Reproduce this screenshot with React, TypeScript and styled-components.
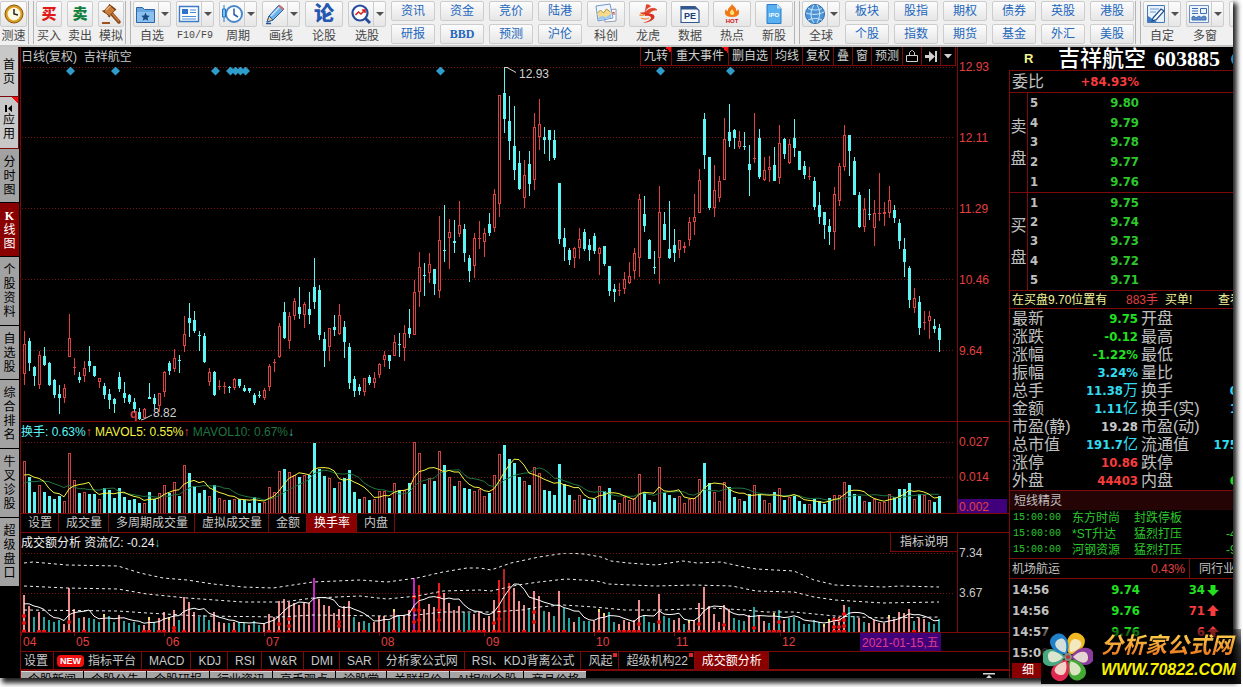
import React from "react";
import styled, { createGlobalStyle, css } from "styled-components";

const UI = `"Liberation Sans", "Noto Sans CJK SC", sans-serif`;
const NUM = `"DejaVu Sans Condensed", "DejaVu Sans", "Noto Sans CJK SC", sans-serif`;
const LINE = "#7c0a0a";
const RED = "#e04040";
const CYAN = "#5cf6f6";

const Global = createGlobalStyle`
  * { box-sizing: border-box; }
  body { margin: 0; background: #fff; font: 12px/14px ${UI}; }
  button { font: inherit; color: inherit; background: none; border: 0; padding: 0; margin: 0; white-space: nowrap; cursor: pointer; }
  svg { display: block; }
`;

/* ---------- data ---------- */

type Candle = [up: 0 | 1, high: number, top: number, bottom: number, low: number];

const candles: Candle[] = [
  [1,331,344,374,385],[0,338,341,363,371],[0,366,367,376,386],[1,351,355,385,389],[0,347,356,365,366],
  [0,362,363,385,386],[0,379,380,395,398],[0,385,394,398,414],[1,384,388,398,403],[1,314,338,357,357],
  [1,358,367,368,375],[0,372,377,380,383],[1,361,368,376,382],[0,346,361,366,372],[0,366,366,376,377],
  [1,378,378,382,388],[0,383,386,395,399],[0,389,394,400,409],[0,398,399,404,413],[0,372,377,389,392],
  [0,382,393,398,403],[0,394,395,402,404],[0,398,402,409,413],[0,408,412,419,420],[1,408,409,418,418],
  [0,383,397,399,399],[0,394,398,404,409],[1,393,393,406,412],[1,371,372,392,397],[0,361,363,371,375],
  [1,349,358,369,372],[0,355,360,361,373],[1,316,334,346,352],[0,303,318,323,337],[0,311,320,331,333],
  [0,331,335,336,351],[0,333,336,362,363],[1,368,372,382,386],[0,371,372,395,396],[1,380,386,387,390],
  [1,382,386,387,394],[0,386,387,388,393],[1,378,379,388,390],[0,379,379,386,388],[0,385,388,391,392],
  [0,388,388,391,393],[0,393,395,403,405],[0,391,395,396,398],[1,388,390,398,400],[1,364,366,387,391],
  [1,359,362,363,372],[1,323,326,357,358],[0,302,312,338,339],[1,312,316,341,349],[1,298,301,316,320],
  [0,287,307,314,319],[1,302,304,315,328],[0,292,309,315,324],[0,258,287,302,309],[0,285,290,335,340],
  [0,332,339,351,367],[1,328,328,347,361],[0,315,327,330,336],[1,304,315,334,335],[0,321,327,342,358],
  [0,343,347,383,389],[0,376,379,391,397],[0,384,387,391,395],[1,378,378,392,396],[0,375,377,383,385],
  [1,372,378,383,388],[1,363,364,375,378],[1,351,355,360,367],[0,355,355,361,369],[1,335,342,356,356],
  [0,333,344,345,357],[1,325,333,348,361],[0,309,328,334,338],[1,280,292,335,335],[1,252,267,292,307],
  [0,263,275,276,296],[1,253,264,273,283],[0,269,269,284,295],[1,216,240,291,298],[0,205,250,251,262],
  [1,219,232,238,269],[0,220,241,243,253],[1,201,225,234,237],[0,224,229,253,262],[0,255,258,271,282],
  [1,233,238,266,278],[1,221,238,239,249],[1,228,233,242,257],[0,213,224,233,236],[1,189,194,228,232],
  [1,95,95,204,217],[0,67,93,119,133],[0,96,121,141,160],[0,106,146,170,180],[0,151,163,189,190],
  [1,160,175,198,208],[0,151,164,184,196],[1,113,127,180,190],[1,99,124,137,150],[0,127,137,140,154],
  [0,130,130,140,161],[0,130,140,158,160],[0,183,183,239,244],[0,228,238,247,261],[0,248,250,260,265],
  [1,247,248,258,268],[1,228,239,248,259],[0,229,232,249,251],[0,239,245,250,261],[0,233,236,251,254],
  [1,247,248,254,275],[0,246,246,264,266],[0,266,266,291,296],[0,284,289,292,302],[1,283,290,291,296],
  [1,272,279,289,294],[1,262,276,283,284],[1,248,253,271,279],[1,194,199,258,277],[0,196,214,226,232],
  [0,239,240,259,259],[0,251,267,268,274],[1,186,212,258,284],[0,212,224,240,240],[0,201,249,258,259],
  [0,229,245,253,262],[1,240,240,250,258],[1,242,246,248,253],[1,217,222,240,246],[1,194,217,222,235],
  [1,169,180,213,213],[0,113,119,155,169],[0,157,157,208,210],[1,165,190,208,217],[1,176,181,198,202],
  [1,118,139,180,180],[0,104,132,141,147],[0,129,130,138,149],[1,131,141,147,149],[0,132,146,147,150],
  [0,145,164,170,196],[1,113,158,159,163],[0,129,138,177,179],[1,157,170,180,181],[1,156,167,170,182],
  [0,147,165,181,181],[1,125,143,178,184],[0,138,139,154,159],[1,139,144,163,164],[0,119,138,148,157],
  [0,151,151,170,170],[0,161,166,175,179],[1,167,176,177,180],[0,177,181,207,210],[0,192,205,217,224],
  [0,212,212,225,239],[0,219,226,232,245],[1,187,194,232,250],[1,163,166,201,206],[1,125,135,167,171],
  [0,135,135,151,176],[0,157,161,195,195],[0,192,195,227,228],[1,198,209,227,232],[0,189,214,215,220],
  [1,200,213,228,246],[1,173,213,214,221],[1,202,212,214,226],[1,186,200,213,218],[0,205,210,218,223],
  [0,219,223,241,249],[0,238,249,262,277],[0,266,268,300,308],[1,288,298,308,313],[0,296,302,328,335],
  [1,311,322,323,330],[1,311,316,321,339],[0,319,326,329,333],[0,324,328,340,352],
];

const volumes = [
  52,36,21,28,21,17,14,17,12,60,33,20,21,19,19,14,25,23,15,25,16,13,14,10,10,21,14,20,28,20,
  31,17,48,40,27,20,23,17,28,15,13,13,14,14,13,10,16,10,11,26,21,42,44,41,38,36,38,38,70,44,
  37,35,25,31,35,43,21,14,16,13,14,22,22,15,30,23,23,30,71,60,29,35,32,62,48,36,27,32,25,24,
  22,24,17,20,38,59,68,54,50,36,32,28,46,40,23,22,18,49,29,18,13,18,14,13,14,27,22,25,13,10,
  16,13,15,39,21,13,11,46,20,18,15,17,10,14,15,34,50,30,21,12,31,26,16,14,12,19,28,19,13,10,
  21,25,13,16,17,12,9,9,14,12,9,15,18,18,31,28,19,17,12,11,14,11,11,19,16,24,24,30,14,19,
  18,13,11,17,
];

// S: strong inflow, T: outflow, Y: turning point, M: extreme volume, R / D: surge days
const flow =
  "SSTSTTTTSSSTSTTTYTTSTTTTSYTSSYSTSSSTTTSSSTSTTSTTSSSSSSSSSSMSSSSSSSTSTTSSSTYTSSMRSSSRSSSSTTSSSSSRDRSSSTSSTSTSTTSTTTSYYTTSSSSSTTTSTTSSTYSSSSSSSSTTTSTSSTYTSTTTTTTTYYSSSTTSTSSSSYSSSSTSSTT";

const flowColor: Record<string, string> = {
  S: "#f08c8c", T: "#22a8a4", Y: "#f08c8c", M: "#c424c4", R: "#f01818", D: "#b82424",
};

const signals: Record<number, number[]> = {
  0: [16, 9], 9: [10], 30: [4], 51: [8], 53: [13, 6], 63: [10, 6], 78: [35, 22, 10], 79: [22, 12],
  83: [35, 22, 12], 94: [9], 95: [20, 13], 102: [20, 10], 123: [8], 127: [10], 135: [8], 140: [7],
  146: [4], 151: [10], 162: [12, 5], 163: [12, 5], 164: [18, 12, 6],
};
const baseMarks = [0,3,4,9,12,24,25,27,28,30,32,37,42,49,51,53,61,68,74,76,78,79,81,83,87,89,90,91,92,94,95,100,105,108,115,119,120,121,122,123,127,131,133,135,136,138,139,140,141,142,144,149,150,151,162,163,164,178];

const amounts = volumes.map((v, i) => {
  const mid = (candles[i][2] + candles[i][3]) / 2;
  return Math.round(v * (0.71 + (370 - mid) * 0.0008));
});

const average = (values: number[], span: number, lead: number[]) => {
  const all = [...lead, ...values];
  return values.map((_, i) => {
    const end = i + lead.length + 1;
    const part = all.slice(end - span, end);
    return part.reduce((a, b) => a + b, 0) / span;
  });
};
const lead = [22, 22, 22, 22, 22, 34, 34, 34, 36];
const xAt = (i: number) => 24 + i * 5;
const toPoints = (values: number[], base: number) =>
  values.map((v, i) => `${xAt(i)},${(base - v).toFixed(1)}`).join(" ");

const bands = [
  "24,563 33,562 67,565 118,566 140,573 163,578 187,580 213,584 243,587 273,588 293,585 313,582 360,580 387,582 417,578 443,572 467,568 480,568 491,570 511,563 539,557 566,553 584,554 601,557 611,561 628,563 656,565 683,561 697,563 721,562 739,566 756,569 794,571 814,580 835,585 883,587 900,586 939,587",
  "24,586 67,588 118,589 147,594 187,598 243,602 283,602 313,598 360,596 387,599 417,596 443,591 480,590 491,591 518,585 539,582 566,579 597,581 608,584 656,586 694,585 732,586 756,591 794,592 814,597 835,600 883,603 939,602",
  "24,610 118,611 147,613 200,616 280,617 313,615 387,616 417,615 443,612 491,612 522,610 539,607 563,605 594,607 625,610 663,610 711,608 745,610 766,612 794,612 835,616 883,618 939,617",
];

/* ---------- page frame ---------- */

const Page = styled.div`
  height: 100vh; padding: 0 10px 9px 0; overflow: hidden; background: #fff;
`;
const Window = styled.div`
  position: relative; height: 100%; display: flex; flex-direction: column;
  background: #000; box-shadow: 3px 4px 5px 1px #222;
`;
const Clip = styled.div`
  flex: 1; min-height: 0; overflow: hidden; display: flex; flex-direction: column;
`;

/* ---------- toolbar ---------- */

const Toolbar = styled.header`
  flex: none; height: 47px; display: flex; align-items: flex-start; padding-top: 1px; overflow: hidden;
  background: #f0f0f0; border-bottom: 2px solid #c4c4c4;
`;
const Group = styled.div<{ $gap?: number }>`
  flex: none; display: flex; gap: ${(p) => p.$gap ?? 5}px;
`;
const Sep = styled.i`
  flex: none; width: 6px; height: 43px; margin: 0 2px 0 1px;
  border-left: 1px solid #b4b4b4; border-right: 1px solid #b4b4b4;
`;
const Tool = styled.button<{ $w: number }>`
  flex: none; width: ${(p) => p.$w}px; height: 43px; display: flex; flex-direction: column; align-items: center; color: #484848;
`;
const face = css`
  border: 1px solid #cdcdcd; border-radius: 2px; background: linear-gradient(#fcfcfc, #e6e6e6);
`;
const IconBox = styled.span`
  ${face} width: 100%; height: 26px; display: flex; align-items: center;
`;
const IconCell = styled.span`
  flex: 1; display: flex; justify-content: center; align-items: center;
`;
const Arrow = styled.span`
  width: 12px; height: 24px; display: flex; align-items: center; justify-content: center; border-left: 1px solid #cdcdcd;
  &::after { content: ""; border: 4px solid transparent; border-top-color: #505050; border-bottom: 0; }
`;
const ToolLabel = styled.span<{ $mono?: boolean }>`
  margin-top: 1px; line-height: 16px;
  ${(p) => p.$mono && css`font: 10px/16px "Liberation Mono", monospace;`}
`;
const Pair = styled.div`
  width: 44px; display: grid; gap: 3px;
`;
const TextTool = styled.button<{ $bold?: boolean }>`
  ${face} height: 20px; color: #2367bd;
  ${(p) => p.$bold && css`font: bold 12px "Liberation Serif", serif;`}
`;
const Glyph = styled.b<{ $c: string; $s: number }>`
  color: ${(p) => p.$c}; font-size: ${(p) => p.$s}px; font-weight: 900; line-height: 22px;
`;

const Icon = ({ children }: { children: React.ReactNode }) => (
  <svg width="22" height="22" viewBox="0 0 22 22" fill="none">{children}</svg>
);
const icons: Record<string, React.ReactNode> = {
  gauge: <Icon><circle cx="11" cy="11" r="9" fill="#d89a1c" stroke="#8a5606" /><circle cx="11" cy="11" r="6.5" fill="#fff8e0" /><path d="M11 6v5l4 1" stroke="#222" strokeWidth="1.5" /></Icon>,
  gavel: <Icon><path d="M11 10l8 9" stroke="#8a4818" strokeWidth="3.500" strokeLinecap="round" /><path d="M12 10.500l7 8" stroke="#cc8040" strokeWidth="1.200" /><path d="M3.500 8.500l6-6.500 6 4.500-6 6.500z" fill="#c87c3c" stroke="#8a4818" /><path d="M2.500 7.500l2.500 2M9 1.500l7 5.500M8 12.500l2 1.500" stroke="#7c3c10" strokeWidth="1.500" /><path d="M6 7l4.500-4" stroke="#f0b47c" strokeWidth="1.200" /><path d="M2 20h8" stroke="#a05020" strokeWidth="2" /></Icon>,
  folder: <Icon><path d="M1.500 4.500h6l2 2h10v13h-18z" fill="#6aa8e0" stroke="#2c66a8" /><path d="M2 9h17v10h-17z" fill="#8cc0ee" /><path d="M10.500 9.500l1.300 2.900 3.100.3-2.300 2.100.7 3-2.800-1.600-2.800 1.600.7-3-2.300-2.100 3.100-.3z" fill="#164c80" /></Icon>,
  news: <Icon><path d="M1.500 3.500h19v15h-19z" fill="#fff" stroke="#3c7cc8" strokeWidth="1.400" /><path d="M4 6h6v5h-6z" fill="#2c74cc" /><path d="M12 7h6M12 9.500h6M4 13.500h14M4 16h14" stroke="#4c8cd4" /></Icon>,
  clock: <Icon><circle cx="13" cy="11" r="8" fill="#fff" stroke="#4a88cc" strokeWidth="2" /><path d="M13 5.500v6l4 2.500" stroke="#245ea4" strokeWidth="1.500" /><path d="M3 2v17" stroke="#2474c4" /><path d="M1.500 6h3v8h-3z" fill="#7cc4f4" stroke="#2474c4" /></Icon>,
  pencil: <Icon><path d="M3 19l2-6L15 2l5 4L9 17z" fill="#6cb0e8" stroke="#28609c" /><path d="M7 13l9-9.500" stroke="#c4e4fc" strokeWidth="1.500" /><path d="M3 19l2-6 4 4z" fill="#ecc894" stroke="#28609c" /><path d="M14.500 2.500l5 4" stroke="#d07070" strokeWidth="2" /><path d="M2 20.500h5" stroke="#234c94" strokeWidth="1.500" /></Icon>,
  search: <Icon><circle cx="10" cy="10" r="7.500" fill="#fff" stroke="#284c9c" strokeWidth="2.200" /><path d="M15.500 15.500l4.500 4.500" stroke="#284c9c" strokeWidth="3" /><path d="M5.500 12l3-3 2.500 2 4-4M12 7h3v3" stroke="#d82020" strokeWidth="1.600" /></Icon>,
  chart: <Icon><path d="M9 7.500l12-1.500v12l-11 1z" fill="#fff" stroke="#8c9cb4" /><path d="M16 11l3-2v3" stroke="#d03030" /><path d="M1 3l14-2 3 14-15 3z" fill="#f0f6ff" stroke="#7498cc" /><path d="M2.500 10l3-3 3 3 3-4 4 3 1 4-13 2z" fill="#f4dc8c" /><path d="M2.500 10l3-3 3 3 3-4 4 3" stroke="#b89428" /><path d="M3 15l4-2 4 1 5-3v4l-13 2z" fill="#9cc8f4" /></Icon>,
  dragon: <Icon><path d="M9 2c2.500-.6 4 .2 4.500 1.500C11 4 9.500 6 8 8M15 5.500c2-.5 3.500 0 5 1.500-3-.4-5 .6-7 2.500-3 3-6 2.500-9.500.5 3.500.2 5.500-1.500 7.500-3 1.500-1 2.500-1.400 4-1.500z" fill="#e04428" stroke="#e04428" strokeWidth=".8" /><path d="M8 11c4-1 9-.5 9.500 2.500.4 3-5 6-12 6.500 5-1.500 9-3.500 8.500-5.500C13.500 13 11 12.500 8 13z" fill="#d83020" /><path d="M4 15c3 1.500 6 1 8 0M2.500 12c2 .5 4 .3 5.500-.5" stroke="#f49038" strokeWidth="1.300" /></Icon>,
  pe: <Icon><path d="M2 3.500h14l4 4v12h-18z" fill="#f6faff" stroke="#32588c" strokeWidth="1.200" /><path d="M2 3.500h14l3 3h-17z" fill="#32588c" /><text x="11" y="16" textAnchor="middle" fontSize="9" fontWeight="bold" fill="#1c3c74">PE</text></Icon>,
  hot: <Icon><path d="M11 1c2 3 5 4 4 7 1 0 2-1 2-2 2 3 2 8-6 8s-8-5-6-8c0 1 1 2 2 2-1-3 3-4 4-7z" fill="#f07818" /><path d="M11 6c1 2 3 3 2 5-1 2-4 1-4-1 0-2 1-2 2-4z" fill="#ffe070" /><text x="11" y="20" textAnchor="middle" fontSize="6" fontWeight="bold" fill="#d41414">HOT</text></Icon>,
  ipo: <Icon><path d="M4 1.500h10l4 4v15h-14z" fill="#58b0f0" stroke="#2c7cc8" /><path d="M14 1.500v4h4z" fill="#c4e4fc" /><text x="11" y="14" textAnchor="middle" fontSize="6" fontWeight="bold" fill="#fff">IPO</text></Icon>,
  globe: <Icon><circle cx="11" cy="11" r="9.500" fill="#4c94d4" stroke="#2c6cac" /><path d="M2 10c6 2 12 2 18-1M4 5.500c5 2 10 2 14 0M4 17c5-2 10-2 14 0M10 2c-4 6-4 12 0 18M13 2c4 6 3 12 0 18" stroke="#cce6fc" /></Icon>,
  edit: <Icon><path d="M2.500 2.500h17v17h-17z" fill="#e8f2fc" stroke="#4478b8" /><path d="M5 6h9M5 9h6" stroke="#6c9cd0" /><path d="M3 19v-6l9 6z" fill="#3c78c4" /><path d="M8 15l8-9 3 2-8 9-4 1z" fill="#fff" stroke="#24548c" strokeWidth="1.300" /></Icon>,
  grid: <Icon><path d="M1.500 2.500h19v17h-19z" fill="#eef4fc" stroke="#6c90c0" /><path d="M4 5.500h6M4 8h6M4 10.500h6M12.500 5.500h6v5h-6z" stroke="#3c6cb0" /><path d="M4 17v-3l2-1 2 2 3-2 2 1.500 3-1.500 2 1v3z" fill="#5c8ccc" stroke="#3c6cb0" /></Icon>,
};

const ToolItem = ({ icon, label, w = 38, arrow, mono }: { icon: React.ReactNode; label: string; w?: number; arrow?: boolean; mono?: boolean }) => (
  <Tool $w={w}>
    <IconBox><IconCell>{icon}</IconCell>{arrow && <Arrow />}</IconBox>
    <ToolLabel $mono={mono}>{label}</ToolLabel>
  </Tool>
);
const pairs = (list: [string, string][]) =>
  list.map(([a, b]) => (
    <Pair key={a}><TextTool>{a}</TextTool><TextTool $bold={b === "BBD"}>{b}</TextTool></Pair>
  ));

/* ---------- side navigation ---------- */

const Body = styled.div`
  flex: 1; min-height: 0; display: flex;
`;
const SideNav = styled.nav`
  flex: none; width: 20px;
`;
const SideTab = styled.button<{ $h: number; $tone?: "light" | "active" }>`
  position: relative; width: 19px; height: ${(p) => p.$h}px; display: flex; flex-direction: column; align-items: center; justify-content: center;
  background: ${(p) => (p.$tone === "light" ? "#c8c8c8" : p.$tone === "active" ? "#8a0000" : "#a2a2a2")};
  color: ${(p) => (p.$tone === "active" ? "#fff" : "#000")};
  border-bottom: 1px solid #000;
  ${(p) => p.$tone === "light" && css`border: 1px solid ${LINE}; border-left: 0; border-top: 0;`}
  span { line-height: 14px; }
  b { font-family: "Liberation Serif", serif; }
`;
const Corner = styled.i<{ $s?: number }>`
  position: absolute; top: 0; right: 0; width: ${(p) => p.$s ?? 7}px; height: ${(p) => p.$s ?? 7}px;
  background: linear-gradient(to top right, transparent 50%, #f01010 50%);
`;

const sideTabs: { text: string; h: number; tone?: "light" | "active" }[] = [
  { text: "首页", h: 50, tone: "light" },
  { text: "应用", h: 52, tone: "light" },
  { text: "分时图", h: 54 },
  { text: "K线图", h: 54, tone: "active" },
  { text: "个股资料", h: 69 },
  { text: "自选股", h: 54 },
  { text: "综合排名", h: 69 },
  { text: "牛叉诊股", h: 69 },
  { text: "超级盘口", h: 69 },
];

/* ---------- chart area ---------- */

const Workspace = styled.main`
  flex: 1; min-width: 0; border-left: 1px solid ${LINE}; color: #c8c8c8; display: flex; flex-direction: column;
`;
const Pane = styled.section`
  flex: none; display: flex; border-bottom: 1px solid ${LINE};
`;
const PaneMain = styled.div`
  flex: 1; min-width: 0; display: flex; flex-direction: column;
`;
const PaneHead = styled.div`
  height: 20px; display: flex; align-items: flex-start; justify-content: space-between; line-height: 20px; white-space: pre;
`;
const Axis = styled.div<{ $step: number; $c?: string }>`
  flex: none; width: 52px; border-left: 1px solid ${LINE}; padding: 13px 0 0 1px; color: ${(p) => p.$c ?? RED};
  display: flex; flex-direction: column;
  span { height: ${(p) => p.$step}px; }
`;
const Current = styled.b`
  height: 14px; margin: -6px 2px 0 -1px; padding-left: 1px; background: #40007c; font-weight: normal; line-height: 16px;
`;
const ChartSvg = styled.svg<{ $h: number }>`
  flex: none; width: 100%; height: ${(p) => p.$h}px; font: 12px ${UI};
`;
const ChartTools = styled.div`
  display: flex; height: 19px; margin-right: 1px; border-bottom: 1px solid ${LINE}; border-right: 1px solid ${LINE};
`;
const ChartTool = styled.button<{ $pad?: number }>`
  position: relative; padding: 0 ${(p) => p.$pad ?? 3}px; border-left: 1px solid ${LINE}; line-height: 18px; color: #d0d0d0;
  display: flex; align-items: center;
`;
const Note = styled.button`
  height: 19px; padding: 0 9px; border: 1px solid ${LINE}; border-width: 0 0 1px 1px; line-height: 18px; color: #d0d0d0;
`;
const Ink = styled.span<{ $c: string }>`color: ${(p) => p.$c};`;
const Tabs = styled.div`
  flex: none; height: 19px; display: flex; border-bottom: 1px solid ${LINE};
`;
const Tab = styled.button<{ $on?: boolean; $tight?: boolean }>`
  position: relative; padding: ${(p) => (p.$tight ? "0 5px 0 3px" : "0 6px 0 7px")}; border-right: 1px solid ${LINE}; display: flex; align-items: center; gap: 4px;
  ${(p) => p.$on && css`background: #8a0000; color: #fff;`}
`;
const Pill = styled.em`
  padding: 0 3px; background: #f01010; color: #fff; border-radius: 4px; font: bold 9px/12px ${UI};
`;
const Dot = styled.i`
  position: absolute; top: 1px; right: 1px; width: 4px; height: 4px; background: #e02828;
`;
const FootTabs = styled(Tabs)`
  height: 20px; border-top: 1px solid ${LINE}; border-bottom: 2px solid ${LINE};
`;
const NewsBar = styled.div`
  flex: none; display: flex; justify-content: space-between; padding-right: 14px;
`;
const NewsTabs = styled.div`display: flex; gap: 1px;`;
const NewsTab = styled.button`
  padding: 1px 7px; background: #a4a4a4; color: #000; border-top: 1px solid #d8d8d8;
`;

const Grid = ({ ys }: { ys: number[] }) => (
  <>{ys.map((y) => <line key={y} x1="22" x2="955" y1={y + 0.5} y2={y + 0.5} stroke="#7a1414" strokeDasharray="1 2" />)}</>
);

const PriceChart = () => (
  <ChartSvg $h={354} viewBox="21 67 936 354" preserveAspectRatio="xMaxYMin slice">
    <Grid ys={[67, 137, 208, 279, 350]} />
    <g shapeRendering="crispEdges">
      {candles.map(([up, high, top, bottom, low], i) => {
        const x = xAt(i);
        const h = Math.max(1, bottom - top);
        return up ? (
          <g key={i} fill={RED}>
            <rect x={x} y={high} width="1" height={Math.max(0, top - high)} />
            <rect x={x} y={bottom} width="1" height={Math.max(0, low - bottom)} />
            <rect x={x - 1} y={top} width="3" height={h} />
            {h > 2 && <rect x={x} y={top + 1} width="1" height={h - 2} fill="#000" />}
          </g>
        ) : (
          <g key={i} fill={CYAN}>
            <rect x={x} y={high} width="1" height={low - high} />
            <rect x={x - 1} y={top} width="3" height={h} />
          </g>
        );
      })}
    </g>
    {[70, 115, 215, 230, 235, 240, 245, 440, 660, 730].map((x) => (
      <path key={x} d={`M${x + 0.5} 66.500l4.500 4.500-4.500 4.500-4.500-4.500z`} fill="#2f9ccc" />
    ))}
    <path d="M504 67.500h4M507 67.500l9 5M141 420l3-1M144 419l8-4" stroke="#d0d0d0" />
    <text x="519" y="78" fill="#d0d0d0">12.93</text>
    <text x="153" y="417" fill="#d0d0d0">8.82</text>
    <text x="130" y="418" fill={RED} fontWeight="bold">q</text>
  </ChartSvg>
);

const VolumeChart = () => (
  <ChartSvg $h={71} viewBox="21 442 936 71" preserveAspectRatio="xMaxYMin slice">
    <Grid ys={[442, 477]} />
    <g shapeRendering="crispEdges">
      {volumes.map((v, i) =>
        candles[i][0] ? (
          <g key={i}>
            <rect x={xAt(i) - 1} y={513 - v} width="3" height={v} fill="#d04040" />
            <rect x={xAt(i)} y={514 - v} width="1" height={v - 1} fill="#000" />
          </g>
        ) : (
          <rect key={i} x={xAt(i) - 1} y={513 - v} width="3" height={v} fill={CYAN} />
        ),
      )}
    </g>
    <polyline points={toPoints(average(volumes, 10, lead), 513)} fill="none" stroke="#1f7440" />
    <polyline points={toPoints(average(volumes, 5, lead), 513)} fill="none" stroke="#f4f440" />
  </ChartSvg>
);

const AmountChart = () => (
  <ChartSvg $h={79} viewBox="21 553 936 79" preserveAspectRatio="xMaxYMin slice">
    <Grid ys={[553, 593]} />
    <g shapeRendering="crispEdges">
      {amounts.map((v, i) => (
        <rect key={i} x={xAt(i) - 1} y={632 - v} width="2" height={v} fill={flowColor[flow[i] ?? "T"]} />
      ))}
      {amounts.map((v, i) => flow[i] === "Y" && <rect key={i} x={xAt(i) - 1} y={631 - v} width="2" height="3" fill="#f0e060" />)}
      {baseMarks.map((i) => <rect key={i} x={xAt(i) - 2} y="630" width="4" height="2" fill="#f01010" />)}
    </g>
    {Object.entries(signals).flatMap(([i, hs]) =>
      hs.map((h) => <circle key={`${i}-${h}`} cx={xAt(+i)} cy={632 - h} r="2" fill="#f01010" />),
    )}
    {bands.map((b) => <polyline key={b} points={b} fill="none" stroke="#f0f0f0" strokeDasharray="3 3" />)}
    <polyline points={toPoints(average(amounts, 5, [26, 26, 26, 26]), 632)} fill="none" stroke="#fff" />
  </ChartSvg>
);

const months: [number, string][] = [[22, "04"], [75, "05"], [165, "06"], [265, "07"], [380, "08"], [485, "09"], [595, "10"], [675, "11"], [781, "12"]];
const DateAxis = () => (
  <ChartSvg $h={18} viewBox="21 633 988 18" preserveAspectRatio="xMaxYMin slice">
    {months.map(([x, m]) => (
      <g key={m} fill={RED}>
        <rect x={x - 1} y="633" width="1" height="3" fill={LINE} />
        <text x={x + 1} y="646">{m}</text>
      </g>
    ))}
    <rect x="860" y="633" width="81" height="18" fill="#40007c" />
    <text x="862" y="647" fill="#e03c8c">2021-01-15,五</text>
  </ChartSvg>
);

const volumeTabs = ["设置", "成交量", "多周期成交量", "虚拟成交量", "金额", "换手率", "内盘"];
const formulaTabs = ["MACD", "KDJ", "RSI", "W&R", "DMI", "SAR", "分析家公式网", "RSI、KDJ背离公式", "风起", "超级机构22", "成交额分析"];
const newsTabs = ["个股新闻", "个股公告", "个股研报", "行业资讯", "高手观点", "诊股堂", "关联报价", "AI相似个股", "商品价格"];

/* ---------- quote panel ---------- */

const Quote = styled.aside`
  flex: none; width: 224px; overflow: hidden; color: #c0c0c0; display: flex; flex-direction: column; white-space: nowrap;
`;
const QuoteHead = styled.div`
  flex: none; height: 23px; padding-left: 15px; display: flex; align-items: center; overflow: hidden;
  font: 500 22px/23px "Liberation Serif", "Noto Sans CJK SC", serif; color: #fff;
`;
const RBadge = styled.span`flex: none; width: 34px; color: #f4f48c; font: bold 13px ${UI};`;
const Code = styled.b`margin: 0 11px 0 8px;`;
const Ball = styled.i`flex: none; width: 14px; height: 14px; border-radius: 50%; background: #2a8cc8;`;
const Sheet = styled.div`
  flex: 1; min-height: 0; border-left: 1px solid ${LINE}; border-top: 1px solid ${LINE};
`;
const Ratio = styled.div`
  height: 22px; padding-left: 2px; display: flex; align-items: center; border-bottom: 1px solid ${LINE}; font-size: 16px;
  b { width: 95px; text-align: right; font: bold 13px ${NUM}; color: #f83c3c; }
`;
const Book = styled.div<{ $h: number }>`
  height: ${(p) => p.$h}px; display: flex; border-bottom: 1px solid ${LINE};
`;
const BookSide = styled.div`
  width: 18px; border-right: 1px solid ${LINE}; display: flex; flex-direction: column; align-items: center; justify-content: center; gap: 16px; font-size: 16px; line-height: 16px;
`;
const BookTable = styled.table`
  height: 100%; width: 111px; border-collapse: collapse; font: bold 13px/14px ${NUM};
  td { padding: 0 0 0 2px; }
  td + td { text-align: right; color: #2cc82c; }
`;
const Order = styled.div`
  height: 18px; padding-left: 2px; display: flex; align-items: center; color: #f4f49c; border-bottom: 1px solid ${LINE};
  span { flex: none; width: 114px; }
  em { flex: none; width: 39px; font-style: normal; color: ${RED}; }
  b { flex: none; width: 53px; font-weight: normal; }
`;
const Stats = styled.table`
  width: 228px; table-layout: fixed; border-collapse: collapse; font-size: 16px; line-height: 18px; margin-top: 1px;
  td { height: 18px; padding: 0 0 0 2px; overflow: visible; }
  td:nth-child(1) { width: 66px; }
  td:nth-child(2) { width: 62px; }
  td:nth-child(3) { width: 72px; padding-left: 3px; }
`;
const Val = styled.td<{ $c: string }>`
  color: ${(p) => p.$c}; text-align: right; font: bold 13px/18px ${NUM};
  span { font: 15px/1px ${UI}; }
`;
const Spirit = styled.h2`
  margin: 0; height: 20px; padding-left: 4px; background: #240404; border-top: 1px solid ${LINE}; font: 12px/20px ${UI};
`;
const SpiritTable = styled.table`
  width: 226px; border-collapse: collapse; color: #2cc82c; line-height: 16px; table-layout: fixed;
  td { padding: 0; height: 16px; }
  td:nth-child(1) { width: 62px; padding-left: 3px; font-family: "Liberation Mono", monospace; font-size: 10px; }
  td:nth-child(2) { width: 62px; }
  td:nth-child(3) { width: 92px; }
`;
const Industry = styled.div`
  height: 21px; padding-left: 2px; display: flex; align-items: stretch; line-height: 20px; border: 1px solid ${LINE}; border-width: 1px 0;
  span { flex: none; width: 110px; }
  em { flex: none; width: 68px; padding-right: 4px; text-align: right; font-style: normal; color: ${RED}; border-right: 1px solid ${LINE}; }
  a { padding-left: 9px; color: inherit; text-decoration: none; }
`;
const Trades = styled.table`
  width: 210px; border-collapse: collapse; table-layout: fixed; font: bold 13px/21px ${NUM};
  td { padding: 0 0 0 2px; height: 21px; text-align: right; }
  td:first-child { width: 60px; text-align: left; }
  td:nth-child(2) { width: 70px; }
  td:nth-child(3) { width: 65px; }
  td:nth-child(4) { width: 15px; }
`;
const Detail = styled.button`
  display: block; width: 32px; height: 22px; margin-left: 2px; background: #8a0000; color: #fff; line-height: 14px; padding-bottom: 8px;
`;

const G = "#20e020", C = "#30dcf0", R = "#f83c3c", W = "#c8c8c8";
const stats: [string, string, string, string, string, string, string][] = [
  ["最新", "9.75", "", G, "开盘", "", W],
  ["涨跌", "-0.12", "", G, "最高", "", W],
  ["涨幅", "-1.22%", "", G, "最低", "", W],
  ["振幅", "3.24%", "", C, "量比", "", W],
  ["总手", "11.38", "万", C, "换手", "0", C],
  ["金额", "1.11", "亿", C, "换手(实)", "1", C],
  ["市盈(静)", "19.28", "", W, "市盈(动)", "", W],
  ["总市值", "191.7", "亿", C, "流通值", "175", C],
  ["涨停", "10.86", "", R, "跌停", "", W],
  ["外盘", "44403", "", R, "内盘", "6", G],
];

const TradeArrow = ({ up }: { up?: boolean }) => (
  <svg width="12" height="12" viewBox="0 0 12 12">
    <path d={up ? "M6 0l6 6H8.500v5h-5V6H0z" : "M6 12l6-6H8.500V1h-5v5H0z"} fill={up ? R : G} />
  </svg>
);

/* ---------- site mark ---------- */

const Mark = styled.a`
  position: absolute; right: -8px; bottom: -6px; width: 200px; height: 55px; padding-left: 2px; display: flex; align-items: center; gap: 1px;
  background: linear-gradient(#0006, #000c 30%, #000e); text-decoration: none; overflow: hidden;
`;
const MarkText = styled.span`
  display: flex; flex-direction: column; padding-left: 7px; white-space: nowrap;
`;
const MarkName = styled.b`
  font: italic bold 22px/27px ${UI}; color: transparent; background: linear-gradient(#ffd850, #e86818); background-clip: text; -webkit-background-clip: text;
`;
const MarkUrl = styled.b`
  font: italic bold 16px/22px ${UI}; color: #f8f000;
`;
const petals = ["#f0b820", "#8c3c9c", "#44a834", "#e02850", "#48a880", "#2080c8"];
const Flower = () => (
  <svg width="50" height="54" viewBox="-25 -27 50 54">
    {petals.map((c, i) => (
      <g key={c} transform={`rotate(${i * 60 + 28})`}>
        <path d="M0-3C-11-9-12-26 0-26S11-9 0-3z" fill={c} />
        <path d="M0-5C-6-11-7-20 1-20S7-11 0-5z" fill="#f4f0dc" opacity=".85" />
      </g>
    ))}
    <circle r="4" fill="#888" /><circle r="2" fill="#c03030" />
  </svg>
);

export default function App() {
  return (
    <Page>
      <Global />
      <Window>
        <Clip>
          <Toolbar>
            <ToolItem w={27} icon={icons.gauge} label="测速" />
            <Sep />
            <Group>
              <ToolItem w={26} icon={<Glyph $c="#e01818" $s={15}>买</Glyph>} label="买入" />
              <ToolItem w={26} icon={<Glyph $c="#10803c" $s={15}>卖</Glyph>} label="卖出" />
              <ToolItem w={26} icon={icons.gavel} label="模拟" />
            </Group>
            <Sep />
            <Group>
              <ToolItem arrow icon={icons.folder} label="自选" />
              <ToolItem arrow mono icon={icons.news} label="F10/F9" />
              <ToolItem arrow icon={icons.clock} label="周期" />
              <ToolItem arrow icon={icons.pencil} label="画线" />
              <ToolItem icon={<Glyph $c="#2458b0" $s={20}>论</Glyph>} label="论股" />
              <ToolItem arrow icon={icons.search} label="选股" />
              {pairs([["资讯", "研报"], ["资金", "BBD"], ["竞价", "预测"], ["陆港", "沪伦"]])}
              <Group $gap={4}>
                <ToolItem icon={icons.chart} label="科创" />
                <ToolItem icon={icons.dragon} label="龙虎" />
                <ToolItem icon={icons.pe} label="数据" />
                <ToolItem icon={icons.hot} label="热点" />
                <ToolItem icon={icons.ipo} label="新股" />
              </Group>
            </Group>
            <Sep />
            <Group>
              <ToolItem arrow icon={icons.globe} label="全球" />
              {pairs([["板块", "个股"], ["股指", "指数"], ["期权", "期货"], ["债券", "基金"], ["英股", "外汇"], ["港股", "美股"]])}
            </Group>
            <Sep />
            <Group>
              <ToolItem arrow icon={icons.edit} label="自定" />
              <ToolItem arrow icon={icons.grid} label="多窗" />
              <ToolItem icon={null} label="" />
            </Group>
          </Toolbar>

          <Body>
            <SideNav>
              {sideTabs.map((t) => (
                <SideTab key={t.text} $h={t.h} $tone={t.tone}>
                  {t.text === "应用" && (
                    <>
                      <Corner />
                      <svg width="8" height="9" viewBox="0 0 8 9"><path d="M0 1h2v7H0zM7 1v7L3 4.500z" /></svg>
                    </>
                  )}
                  {[...t.text].map((ch) => <span key={ch}>{ch === "K" ? <b>K</b> : ch}</span>)}
                </SideTab>
              ))}
            </SideNav>

            <Workspace>
              <Pane>
                <PaneMain>
                  <PaneHead>
                    <span>日线(复权)  吉祥航空</span>
                    <ChartTools>
                      <ChartTool>九转<Corner $s={6} /></ChartTool>
                      <ChartTool $pad={4}>重大事件<Corner $s={6} /></ChartTool>
                      <ChartTool>删自选</ChartTool>
                      <ChartTool>均线</ChartTool>
                      <ChartTool>复权</ChartTool>
                      <ChartTool>叠</ChartTool>
                      <ChartTool>窗</ChartTool>
                      <ChartTool>预测</ChartTool>
                      <ChartTool aria-label="锁定">
                        <svg width="12" height="14" viewBox="0 0 12 14" fill="none" stroke="#d0d0d0"><path d="M.5 6.500h11v6H.5zM3.500 6.500v-3l2-2h1l2 2v3" /></svg>
                      </ChartTool>
                      <ChartTool aria-label="最新">
                        <svg width="12" height="11" viewBox="0 0 12 11"><path d="M0 4h4V0l6 5.500L4 11V7H0zM10 0h2v11h-2z" fill="#d0d0d0" /></svg>
                      </ChartTool>
                      <ChartTool aria-label="更多">
                        <svg width="8" height="5" viewBox="0 0 8 5"><path d="M0 0h8L4 4.500z" fill="#d0d0d0" /></svg>
                      </ChartTool>
                    </ChartTools>
                  </PaneHead>
                  <PriceChart />
                </PaneMain>
                <Axis $step={71}>
                  {["12.93", "12.11", "11.29", "10.46", "9.64"].map((v) => <span key={v}>{v}</span>)}
                </Axis>
              </Pane>

              <Pane>
                <PaneMain>
                  <PaneHead>
                    <span>
                      <Ink $c={CYAN}>换手: 0.63%</Ink><Ink as="b" $c="#f04040">↑</Ink>
                      <Ink $c="#f4f440"> MAVOL5: 0.55%</Ink><Ink as="b" $c="#f04040">↑</Ink>
                      <Ink $c="#1f7440"> MAVOL10: 0.67%</Ink><Ink as="b" $c="#40c0b0">↓</Ink>
                    </span>
                  </PaneHead>
                  <VolumeChart />
                </PaneMain>
                <Axis $step={35}>
                  <span>0.027</span><span>0.014</span><Current>0.002</Current>
                </Axis>
              </Pane>

              <Tabs>
                {volumeTabs.map((t) => <Tab key={t} $on={t === "换手率"}>{t}</Tab>)}
              </Tabs>

              <Pane>
                <PaneMain>
                  <PaneHead>
                    <Ink $c="#f0f0f0">成交额分析 资流亿: -0.24<Ink as="b" $c="#40c0b0">↓</Ink></Ink>
                    <Note>指标说明</Note>
                  </PaneHead>
                  <AmountChart />
                </PaneMain>
                <Axis $step={40} $c="#c8c8c8"><span>7.34</span><span>3.67</span></Axis>
              </Pane>
              <DateAxis />

              <FootTabs>
                <Tab $tight>设置</Tab>
                <Tab $tight><Pill>NEW</Pill>指标平台</Tab>
                {formulaTabs.map((t) => (
                  <Tab key={t} $on={t === "成交额分析"}>{t}{(t === "风起" || t === "超级机构22") && <Dot />}</Tab>
                ))}
              </FootTabs>
              <NewsBar>
                <NewsTabs>{newsTabs.map((t) => <NewsTab key={t}>{t}</NewsTab>)}</NewsTabs>
                <svg width="12" height="12" viewBox="0 0 12 12"><path d="M0 2h12v1.500H0zM6 4l4 4H7v3H5V8H2z" fill="#d8d8d8" /></svg>
              </NewsBar>
            </Workspace>

            <Quote>
              <QuoteHead>
                <RBadge>R</RBadge>吉祥航空<Code>603885</Code><Ball />
              </QuoteHead>
              <Sheet>
                <Ratio>委比<b>+84.93%</b></Ratio>
                <Book $h={100}>
                  <BookSide><span>卖</span><span>盘</span></BookSide>
                  <BookTable><tbody>
                    {[["5", "9.80"], ["4", "9.79"], ["3", "9.78"], ["2", "9.77"], ["1", "9.76"]].map(([n, p]) => <tr key={n}><td>{n}</td><td>{p}</td></tr>)}
                  </tbody></BookTable>
                </Book>
                <Book $h={98}>
                  <BookSide><span>买</span><span>盘</span></BookSide>
                  <BookTable><tbody>
                    {[["1", "9.75"], ["2", "9.74"], ["3", "9.73"], ["4", "9.72"], ["5", "9.71"]].map(([n, p]) => <tr key={n}><td>{n}</td><td>{p}</td></tr>)}
                  </tbody></BookTable>
                </Book>
                <Order><span>在买盘9.70位置有</span><em>883手</em><b>买单!</b>查看</Order>
                <Stats><tbody>
                  {stats.map(([k, v, unit, c, k2, v2, c2]) => (
                    <tr key={k}>
                      <td>{k}</td><Val $c={c}>{v}{unit && <span>{unit}</span>}</Val>
                      <td>{k2}</td><Val $c={c2}>{v2}</Val>
                    </tr>
                  ))}
                </tbody></Stats>
                <Spirit>短线精灵</Spirit>
                <SpiritTable><tbody>
                  <tr><td>15:00:00</td><td>东方时尚</td><td>封跌停板</td><td /></tr>
                  <tr><td>15:00:00</td><td>*ST升达</td><td>猛烈打压</td><td>-4</td></tr>
                  <tr><td>15:00:00</td><td>河钢资源</td><td>猛烈打压</td><td>-9</td></tr>
                </tbody></SpiritTable>
                <Industry><span>机场航运</span><em>0.43%</em><a href="#industry">同行业</a></Industry>
                <Trades><tbody>
                  <tr><td>14:56</td><Ink as="td" $c={G}>9.74</Ink><Ink as="td" $c={G}>34</Ink><td><TradeArrow /></td></tr>
                  <tr><td>14:56</td><Ink as="td" $c={G}>9.76</Ink><Ink as="td" $c={R}>71</Ink><td><TradeArrow up /></td></tr>
                  <tr><td>14:57</td><Ink as="td" $c={G}>9.76</Ink><Ink as="td" $c={R}>6</Ink><td><TradeArrow up /></td></tr>
                  <tr><td>15:00</td><td /><td /><td /></tr>
                </tbody></Trades>
                <Detail>细</Detail>
              </Sheet>
            </Quote>
          </Body>
        </Clip>
        <Mark href="#site">
          <Flower />
          <MarkText><MarkName>分析家公式网</MarkName><MarkUrl>WWW.70822.COM</MarkUrl></MarkText>
        </Mark>
      </Window>
    </Page>
  );
}
